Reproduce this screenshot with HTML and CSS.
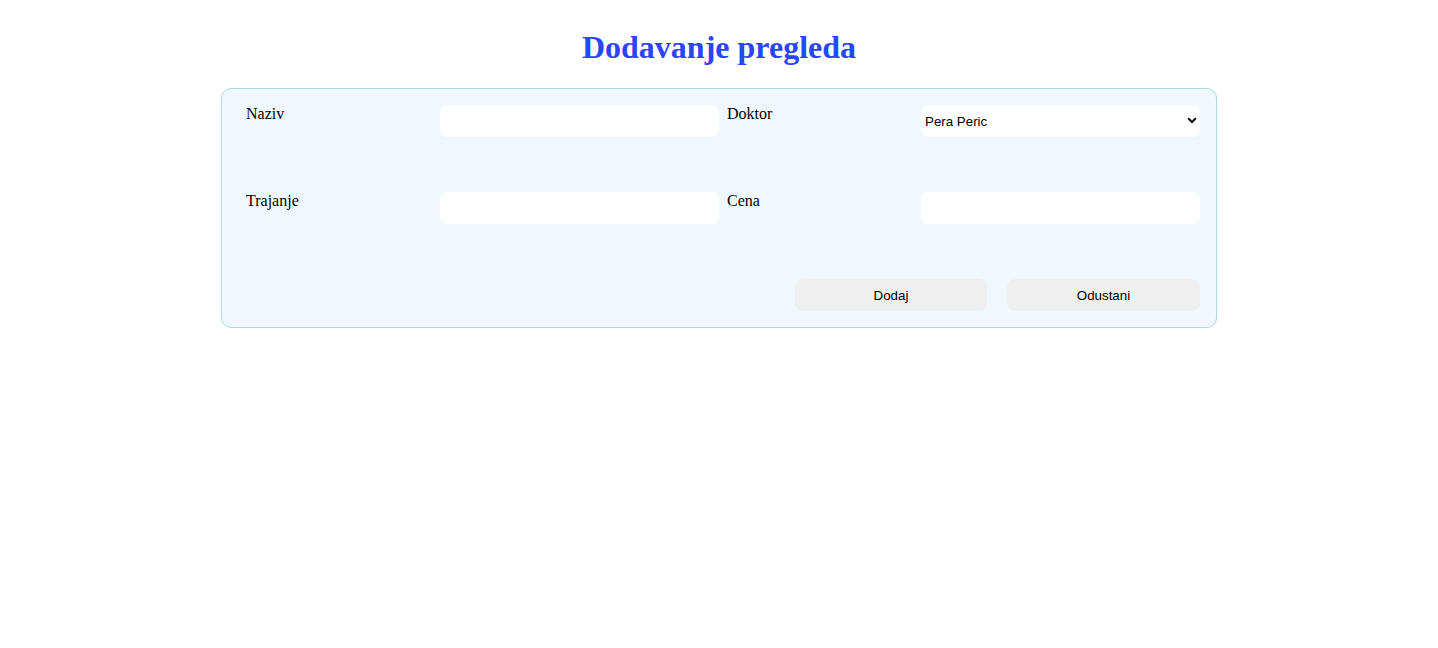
FILE: index.html
```html
<!DOCTYPE html>
<html lang="sr">
<head>
<meta charset="utf-8">
<title>Dodavanje pregleda</title>
<link rel="stylesheet" href="styles.css">
</head>
<body>
<h1 class="title">Dodavanje pregleda</h1>
<form class="card">
  <div class="grid">
    <label class="lbl" for="naziv">Naziv</label>
    <input class="field" id="naziv" type="text">
    <label class="lbl lbl-right" for="doktor">Doktor</label>
    <div class="select-wrap">
      <select class="field select" id="doktor">
        <option>Pera Peric</option>
      </select>
      <svg class="chev" width="10" height="7" viewBox="0 0 10 7"><path d="M1.2 1.3 L5 5 L8.8 1.3" fill="none" stroke="#000" stroke-width="2"/></svg>
    </div>
    <label class="lbl" for="trajanje">Trajanje</label>
    <input class="field" id="trajanje" type="text">
    <label class="lbl lbl-right" for="cena">Cena</label>
    <input class="field" id="cena" type="text">
  </div>
  <div class="actions">
    <button type="button" class="btn btn-add">Dodaj</button>
    <button type="button" class="btn btn-cancel">Odustani</button>
  </div>
</form>
</body>
</html>
```

FILE: styles.css
```css
body {
  margin: 8px;
  font-family: "Liberation Serif", "Times New Roman", serif;
  font-size: 16px;
  color: #000;
  background: #fff;
}
.title {
  margin: 21px 0 22px;
  font-size: 32px;
  line-height: 37px;
  font-weight: bold;
  text-align: center;
  color: #2a45f8;
}
.card {
  width: 954px;
  margin: 0 auto;
  padding: 16px 16px 16px 24px;
  border: 1px solid #add8e6;
  border-radius: 10px;
  background: #f0f8ff;
}
.grid {
  display: grid;
  grid-template-columns: 194px 279px 202px 279px;
  row-gap: 55px;
}
.lbl {
  line-height: 18px;
}
.lbl-right {
  padding-left: 8px;
}
.field {
  box-sizing: border-box;
  display: block;
  width: 279px;
  height: 32px;
  margin: 0;
  border: none;
  border-radius: 8px;
  background: #fff;
  font-family: "Liberation Sans", Arial, sans-serif;
  font-size: 13.33px;
  outline: none;
}
.select-wrap {
  position: relative;
  width: 279px;
  height: 32px;
}
.select {
  appearance: none;
  -webkit-appearance: none;
  padding: 0 24px 0 4px;
  color: #000;
}
.chev {
  position: absolute;
  right: 3px;
  top: 12px;
  pointer-events: none;
}
.actions {
  display: flex;
  justify-content: flex-end;
  gap: 20px;
  margin-top: 55px;
}
.btn {
  height: 32px;
  border: none;
  border-radius: 8px;
  background: #efefef;
  font-family: "Liberation Sans", Arial, sans-serif;
  font-size: 13.33px;
  color: #000;
  padding: 0;
}
.btn-add { width: 192px; }
.btn-cancel { width: 193px; }
```
